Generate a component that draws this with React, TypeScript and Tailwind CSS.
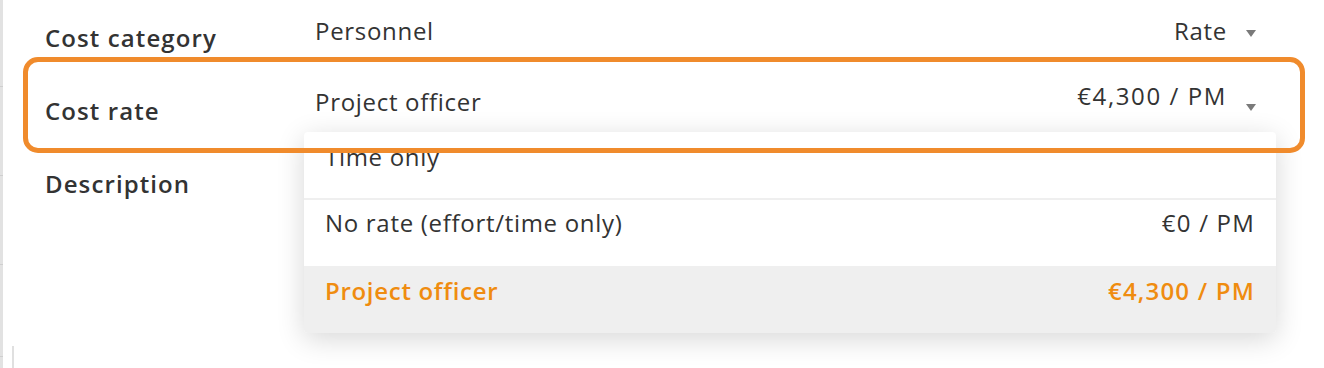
import React from 'react';

const Caret: React.FC<{ className?: string }> = ({ className }) => (
    <svg className={className} width="10" height="7" viewBox="0 0 10 7" fill="#7a7a7a">
        <path d="M0 0h10L5 7z" />
    </svg>
);

const options = [
    { label: 'Time only', rate: '', selected: false, h: 'h-[68px]', pt: 'pt-[11px]' },
    { label: 'No rate (effort/time only)', rate: '€0 / PM', selected: false, h: 'h-[66px]', pt: 'pt-[9px]' },
    { label: 'Project officer', rate: '€4,300 / PM', selected: true, h: 'h-[67px]', pt: 'pt-[11px]' },
];

const App: React.FC = () => {
    return (
        <div className="relative w-[1324px] h-[368px] overflow-hidden bg-white text-[#333] font-['Open_Sans',sans-serif] text-[24px] leading-[28px] tracking-[0.7px]">
            <div className="flex h-full">
                {/* left edge of the panel behind */}
                <div className="w-[3px] h-full bg-[#e2e2e2] flex flex-col">
                    <div className="h-[87px] border-b border-[#cfcfcf]"></div>
                    <div className="h-[89px] border-b border-[#cfcfcf]"></div>
                    <div className="h-[89px] border-b border-[#cfcfcf]"></div>
                    <div className="h-[92px] border-b border-[#cfcfcf]"></div>
                </div>

                <div className="relative flex-1 pl-[42px] pr-[68px]">
                    {/* Cost category */}
                    <div className="flex h-[74px]">
                        <div className="w-[270px] pt-[24px] font-semibold tracking-[1.1px]">Cost category</div>
                        <div className="flex-1 flex justify-between pt-[17px]">
                            <span>Personnel</span>
                            <span className="flex items-start gap-[19px]">
                                Rate
                                <Caret className="mt-[13px]" />
                            </span>
                        </div>
                    </div>

                    {/* Cost rate */}
                    <div className="flex h-[73px]">
                        <div className="w-[270px] pt-[23px] font-semibold tracking-[1.1px]">Cost rate</div>
                        <div className="flex-1 flex justify-between">
                            <span className="pt-[14px]">Project officer</span>
                            <span className="flex items-start gap-[19px] pt-[8px]">
                                <span className="tracking-[1.6px]">€4,300 / PM</span>
                                <Caret className="mt-[22px]" />
                            </span>
                        </div>
                    </div>

                    {/* Description */}
                    <div className="flex h-[74px]">
                        <div className="w-[270px] pt-[23px] font-semibold tracking-[1.1px]">Description</div>
                    </div>

                    <div className="absolute left-[9px] top-[346px] w-[2px] h-[30px] bg-[#e0e0e0]"></div>
                </div>
            </div>

            {/* dropdown menu */}
            <div className="absolute left-[304px] top-[132px] w-[972px] rounded-[4px] bg-white overflow-hidden shadow-[0_6px_28px_rgba(0,0,0,0.16)]">
                {options.map((o, i) => (
                    <div
                        key={o.label}
                        className={`flex justify-between px-[21px] ${o.h} ${o.pt} ${i === 0 ? 'border-b-2 border-[#efefef]' : ''} ${o.selected ? 'bg-[#efefef] text-[#ef8c10] font-semibold' : ''}`}
                    >
                        <span>{o.label}</span>
                        <span className={o.rate ? 'tracking-[1.2px]' : ''}>{o.rate}</span>
                    </div>
                ))}
            </div>

            {/* highlight box */}
            <div className="absolute left-[23px] top-[57px] w-[1282px] h-[96px] border-[5px] border-[#f08b2c] rounded-[15px]"></div>
        </div>
    );
};

export default App;
